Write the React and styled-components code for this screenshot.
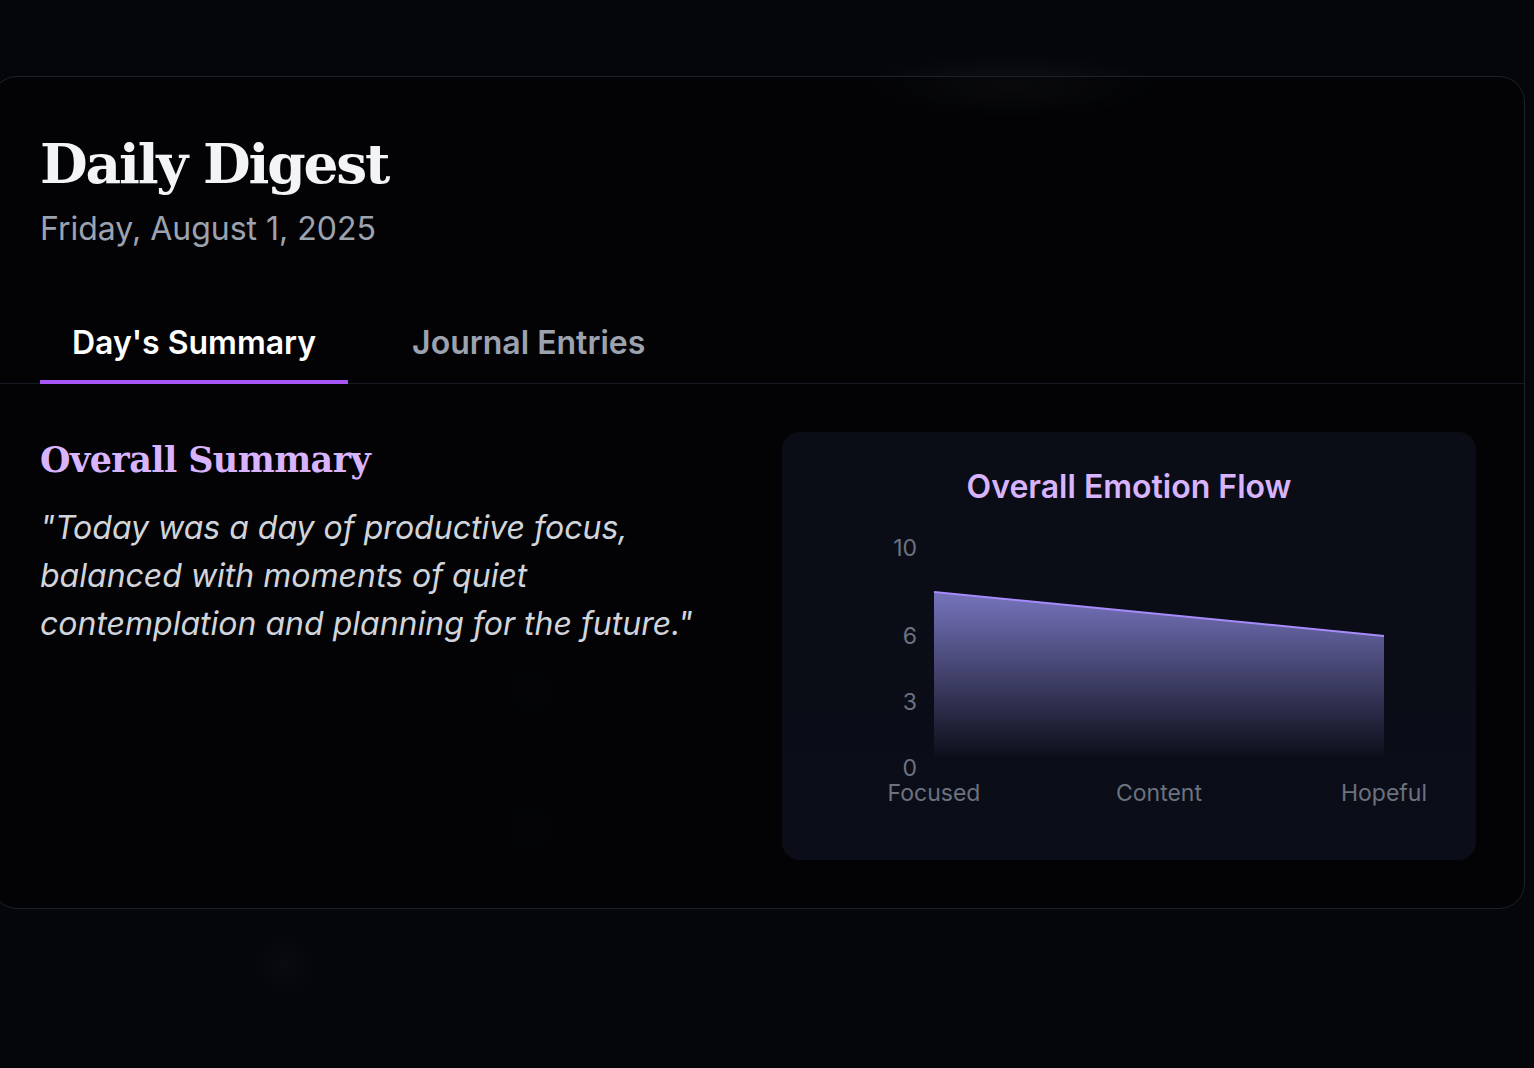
import React from "react";
import styled, { createGlobalStyle } from "styled-components";

const GlobalStyle = createGlobalStyle`
  html, body {
    margin: 0;
    padding: 0;
    background: #05060a;
    overflow: hidden;
  }
  body {
    font-family: Inter, "Noto Sans", sans-serif;
    -webkit-font-smoothing: antialiased;
  }
  * { box-sizing: border-box; }
`;

const Page = styled.div`
  position: relative;
  width: 1534px;
  height: 1068px;
  padding-top: 76px;
  background:
    radial-gradient(ellipse 150px 32px at 1012px 86px, rgba(255,255,255,0.045), transparent 100%),
    radial-gradient(circle 30px at 285px 965px, rgba(255,255,255,0.018), transparent 100%),
    radial-gradient(circle 30px at 530px 690px, rgba(255,255,255,0.012), transparent 100%),
    radial-gradient(circle 30px at 530px 828px, rgba(255,255,255,0.012), transparent 100%),
    #05060a;
`;

const Card = styled.section`
  width: 1534px;
  margin-left: -9px;
  border: 1px solid #1c222c;
  border-radius: 26px;
  background: rgba(0, 0, 0, 0.38);
  padding: 48px;
`;

const Title = styled.h1`
  margin: 2px 0 0;
  font-family: "DejaVu Serif", "Liberation Serif", serif;
  font-weight: 700;
  font-size: 55px;
  line-height: 74px;
  letter-spacing: -2.2px;
  color: #f3f4f6;
`;

const DateLine = styled.p`
  margin: 10px 0 0;
  font-family: Inter, sans-serif;
  font-size: 32px;
  line-height: 36px;
  color: #9ca3af;
`;

const Tabs = styled.nav`
  display: flex;
  gap: 32px;
  margin: 59px -48px 0;
  padding: 0 48px;
  border-bottom: 1px solid #161b23;
`;

const Tab = styled.button`
  appearance: none;
  background: none;
  border: none;
  border-bottom: 4px solid ${(p) => (p.$active ? "#a855f7" : "transparent")};
  margin-bottom: -1px;
  padding: 18px 32px 18px;
  font-family: Inter, sans-serif;
  font-weight: 600;
  font-size: 32px;
  line-height: 38px;
  color: ${(p) => (p.$active ? "#ffffff" : "#9ca3af")};
  cursor: pointer;
`;

const Content = styled.div`
  display: grid;
  grid-template-columns: 1fr 1fr;
  gap: 48px;
  padding-top: 48px;
`;

const SummaryCol = styled.div`
  padding-top: 5px;
`;

const SectionTitle = styled.h2`
  margin: 0;
  font-family: "DejaVu Serif", "Liberation Serif", serif;
  font-weight: 700;
  font-size: 35px;
  line-height: 46px;
  letter-spacing: -0.6px;
  color: #d8b4fe;
`;

const Quote = styled.p`
  margin: 21px 0 0;
  font-family: Inter, sans-serif;
  font-style: italic;
  font-size: 32px;
  line-height: 48px;
  color: #d1d5db;
`;

const ChartCard = styled.div`
  border-radius: 18px;
  background: linear-gradient(180deg, #0a0d16 0%, #0b0e18 100%);
  padding: 37px 0 40px;
  display: flex;
  flex-direction: column;
  align-items: center;
`;

const ChartTitle = styled.h3`
  margin: 0;
  font-family: Inter, sans-serif;
  font-weight: 600;
  font-size: 32px;
  line-height: 36px;
  color: #d8b4fe;
`;

const ChartSvg = styled.svg`
  display: block;
  margin-top: 15px;
  width: 694px;
  height: 300px;
  overflow: visible;
`;

const data = [
  { label: "Focused", value: 8 },
  { label: "Content", value: 7 },
  { label: "Hopeful", value: 6 },
];
const xs = [152, 377, 602];
const yOf = (v) => 248 - 22 * v;
const ticks = [0, 3, 6, 10];

function EmotionChart() {
  const pts = data.map((d, i) => `${xs[i]},${yOf(d.value)}`);
  const line = `M${pts.join(" L")}`;
  const area = `${line} L${xs[2]},${yOf(0)} L${xs[0]},${yOf(0)} Z`;
  return (
    <ChartSvg viewBox="0 0 694 300">
      <defs>
        <linearGradient id="flowFill" x1="0" y1="0" x2="0" y2="1">
          <stop offset="5%" stopColor="#8884d8" stopOpacity="0.82" />
          <stop offset="95%" stopColor="#8884d8" stopOpacity="0" />
        </linearGradient>
      </defs>
      <path d={area} fill="url(#flowFill)" />
      <path d={line} fill="none" stroke="#a78bfa" strokeWidth="2" />
      {ticks.map((t) => (
        <text
          key={t}
          x={135}
          y={yOf(t)}
          textAnchor="end"
          dominantBaseline="central"
          fontFamily="Inter, sans-serif"
          fontSize="23"
          fill="#6b7280"
        >
          {t}
        </text>
      ))}
      {data.map((d, i) => (
        <text
          key={d.label}
          x={xs[i]}
          y={273}
          textAnchor="middle"
          dominantBaseline="central"
          fontFamily="Inter, sans-serif"
          fontSize="23"
          fill="#6b7280"
        >
          {d.label}
        </text>
      ))}
    </ChartSvg>
  );
}

export default function App() {
  return (
    <>
      <GlobalStyle />
      <Page>
        <Card>
          <Title>Daily Digest</Title>
          <DateLine>Friday, August 1, 2025</DateLine>
          <Tabs>
            <Tab $active>Day's Summary</Tab>
            <Tab>Journal Entries</Tab>
          </Tabs>
          <Content>
            <SummaryCol>
              <SectionTitle>Overall Summary</SectionTitle>
              <Quote>
                "Today was a day of productive focus, balanced with moments of
                quiet contemplation and planning for the future."
              </Quote>
            </SummaryCol>
            <ChartCard>
              <ChartTitle>Overall Emotion Flow</ChartTitle>
              <EmotionChart />
            </ChartCard>
          </Content>
        </Card>
      </Page>
    </>
  );
}
